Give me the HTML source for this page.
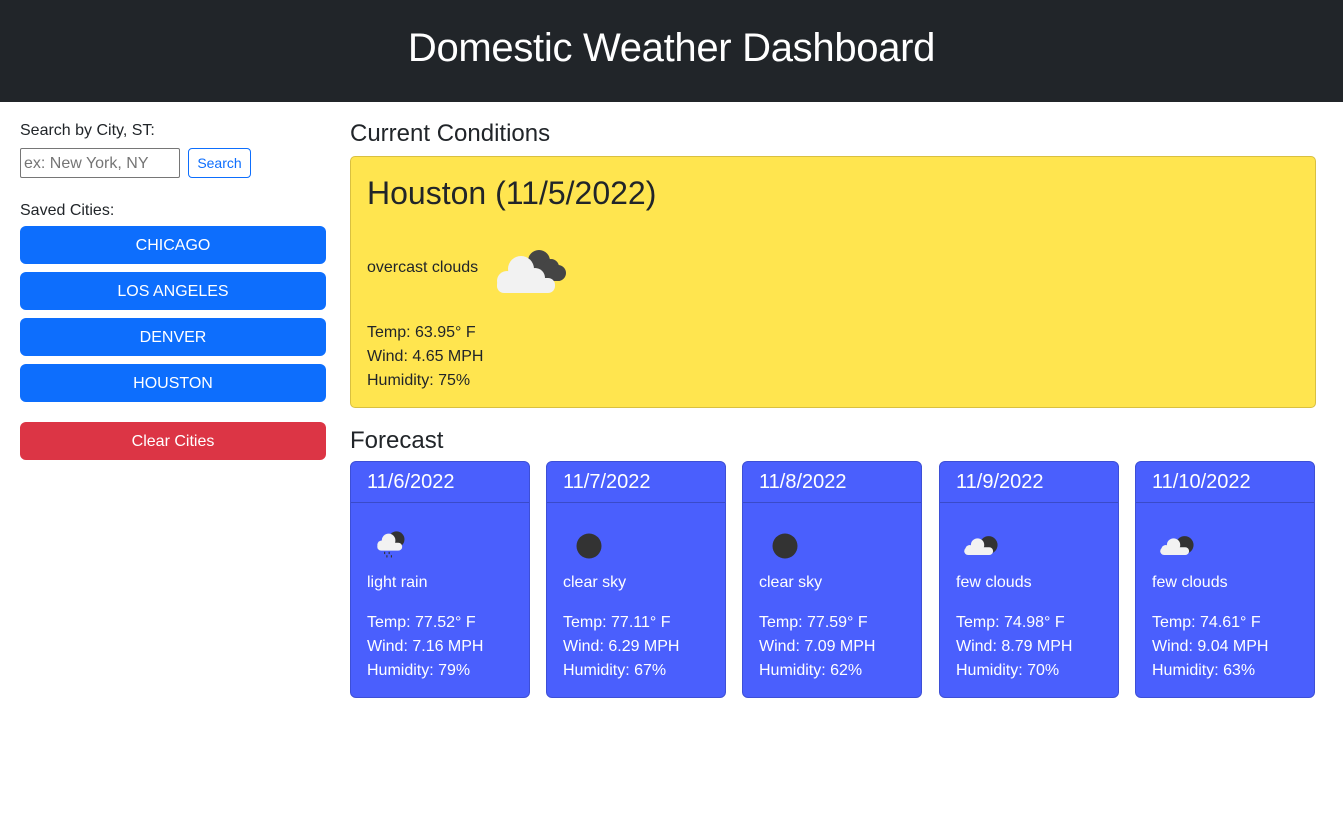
<!DOCTYPE html>
<html><head><meta charset="utf-8"><style>
*{box-sizing:border-box;margin:0;padding:0}
body{width:1343px;height:824px;background:#fff;font-family:"Liberation Sans",Helvetica,Arial,sans-serif;color:#212529;font-size:16px;position:relative;overflow:hidden}
.hdr{height:102px;background:#212529;color:#fff;text-align:center;font-size:40px;font-weight:500;line-height:96px;letter-spacing:-0.3px}
.abs{position:absolute}
.btn{position:absolute;left:20px;width:306px;height:38px;border-radius:6px;background:#0d6efd;color:#fff;text-align:center;line-height:40px;font-size:16px}
.card{position:absolute;top:461px;width:180px;height:237px;background:#4a5ffd;border:1px solid #3d4fd6;border-radius:6px;color:#fff}
.card .h{height:41px;border-bottom:1px solid #3a4bc9;font-size:20px;padding-left:16px;line-height:41px}
.card .b{padding:0 16px}
.card svg{display:block;margin-top:26px}
.d{margin-top:13px}
.t{margin-top:19px;line-height:24px}
</style></head><body>
<div class="hdr">Domestic Weather Dashboard</div>
<div class="abs" style="left:20px;top:122px">Search by City, ST:</div>
<div class="abs" style="left:20px;top:148px;width:160px;height:30px;border:1px solid #767676;border-radius:2px;color:#757575;line-height:30px;padding-left:3px">ex: New York, NY</div>
<div class="abs" style="left:188px;top:148px;width:63px;height:30px;border:1px solid #0d6efd;border-radius:4px;color:#0d6efd;font-size:14px;text-align:center;line-height:28px">Search</div>
<div class="abs" style="left:20px;top:202px">Saved Cities:</div>
<div class="btn" style="top:226px">CHICAGO</div>
<div class="btn" style="top:272px">LOS ANGELES</div>
<div class="btn" style="top:318px">DENVER</div>
<div class="btn" style="top:364px">HOUSTON</div>
<div class="btn" style="top:422px;background:#dc3545">Clear Cities</div>
<div class="abs" style="left:350px;top:120px;font-size:24px;font-weight:500">Current Conditions</div>
<div class="abs" style="left:350px;top:156px;width:966px;height:252px;background:#ffe54f;border:1px solid #d9c040;border-radius:5px">
<div class="abs" style="left:16px;top:18px;font-size:32px;font-weight:500">Houston (11/5/2022)</div>
<div class="abs" style="left:16px;top:102px">overcast clouds</div>
<svg class="abs" style="left:144px;top:86px" width="76" height="52" viewBox="0 0 76 52"><g fill="#454545"><circle cx="44" cy="18" r="11"/><circle cx="56" cy="24" r="8"/><circle cx="63" cy="30" r="8"/><rect x="40" y="24" width="30" height="14" rx="7"/></g><g fill="#f2f2f2"><circle cx="26" cy="26" r="13"/><circle cx="40" cy="35" r="10"/><circle cx="12" cy="38" r="10"/><rect x="2" y="35" width="58" height="15" rx="7"/></g></svg>
<div class="abs" style="left:16px;top:164px;line-height:24px">Temp: 63.95° F<br>Wind: 4.65 MPH<br>Humidity: 75%</div>
</div>
<div class="abs" style="left:350px;top:427px;font-size:24px;font-weight:500">Forecast</div>

<div class="card" style="left:350px"><div class="h">11/6/2022</div><div class="b">
<svg style="margin-left:8px" width="34" height="32" viewBox="0 0 30 28"><circle cx="19" cy="9" r="7" fill="#333"/><g fill="#f2f2f2"><circle cx="12" cy="10" r="6"/><circle cx="6" cy="14" r="4"/><rect x="2" y="12" width="22" height="7" rx="3.5"/></g><g fill="#333"><rect x="8" y="20" width="1" height="2"/><rect x="12" y="20" width="1" height="2"/><rect x="10" y="23" width="1" height="2"/><rect x="14" y="23" width="1" height="2"/></g></svg>
<div class="d">light rain</div><div class="t">Temp: 77.52° F<br>Wind: 7.16 MPH<br>Humidity: 79%</div></div></div>

<div class="card" style="left:546px"><div class="h">11/7/2022</div><div class="b">
<svg style="margin-left:8px" width="34" height="32" viewBox="0 0 34 32"><circle cx="18" cy="17" r="12.5" fill="#333"/></svg>
<div class="d">clear sky</div><div class="t">Temp: 77.11° F<br>Wind: 6.29 MPH<br>Humidity: 67%</div></div></div>

<div class="card" style="left:742px"><div class="h">11/8/2022</div><div class="b">
<svg style="margin-left:8px" width="34" height="32" viewBox="0 0 34 32"><circle cx="18" cy="17" r="12.5" fill="#333"/></svg>
<div class="d">clear sky</div><div class="t">Temp: 77.59° F<br>Wind: 7.09 MPH<br>Humidity: 62%</div></div></div>

<div class="card" style="left:939px"><div class="h">11/9/2022</div><div class="b">
<svg style="margin-left:6px" width="40" height="32" viewBox="0 0 36 28"><circle cx="24" cy="14" r="8" fill="#333"/><g fill="#f2f2f2"><circle cx="14" cy="14" r="6"/><circle cx="7" cy="18" r="4"/><rect x="2" y="16" width="26" height="7" rx="3.5"/></g></svg>
<div class="d">few clouds</div><div class="t">Temp: 74.98° F<br>Wind: 8.79 MPH<br>Humidity: 70%</div></div></div>

<div class="card" style="left:1135px"><div class="h">11/10/2022</div><div class="b">
<svg style="margin-left:6px" width="40" height="32" viewBox="0 0 36 28"><circle cx="24" cy="14" r="8" fill="#333"/><g fill="#f2f2f2"><circle cx="14" cy="14" r="6"/><circle cx="7" cy="18" r="4"/><rect x="2" y="16" width="26" height="7" rx="3.5"/></g></svg>
<div class="d">few clouds</div><div class="t">Temp: 74.61° F<br>Wind: 9.04 MPH<br>Humidity: 63%</div></div></div>
</body></html>
